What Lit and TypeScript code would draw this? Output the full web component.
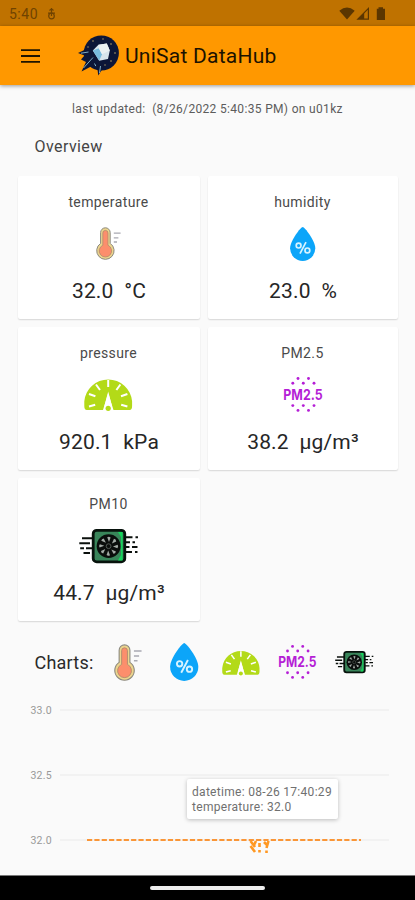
import { LitElement, html, svg, css } from "lit";
import { customElement, property } from "lit/decorators.js";

const thermometer = svg`
  <path d="M4.6 5.6a4.8 4.8 0 0 1 9.6 0V16.4a8.7 8.7 0 1 1-9.6 0Z" fill="#ecd48c" stroke="#8c8a80" stroke-width="1"/>
  <path d="M6.8 6a2.6 2.6 0 0 1 5.2 0V18.2a6.2 6.2 0 1 1-5.2 0Z" fill="#fc8e6c" stroke="#a8866a" stroke-width=".7"/>
  <path d="M17.8 6.2h6.8M17.8 10.8h4.6M17.8 15h3.2" stroke="#a9a9b2" stroke-width="1.3" fill="none"/>`;

const drop = svg`
  <path d="M12.7 0C14.5 0 25.3 13.5 25.3 21.3A12.6 12.6 0 0 1 .1 21.3C.1 13.5 10.9 0 12.7 0Z" fill="#0ca5f9"/>
  <g fill="none" stroke="#d6f3ff" stroke-width="1.7"><circle cx="8.6" cy="18.6" r="2.4"/><circle cx="17.4" cy="23.4" r="2.4"/><path d="M16 15.2 10 26.6"/></g>`;

const gauge = svg`
  <path d="M2.8 33Q.3 33 .3 29V24.3A24 24 0 0 1 48.1 24.3V29Q48.1 33 45.6 33H29.5L24.2 16 19 33Z" fill="#b3da18"/>
  <path d="M24.2 14.5 28 29.3a4.8 4.8 0 0 1-7.6 0Z" fill="#fff"/>
  <path d="M24.2 3V10M12 7.5 16 13M36.4 7.5 32.4 13M5 17 11.4 19.2M43.4 17 37 19.2M5 29.5 11.2 27.8M43.4 29.5 37.2 27.8" stroke="#fff" stroke-width="2" fill="none"/>
  <circle cx="24.2" cy="31.3" r="3.5" fill="#fff"/><circle cx="24.2" cy="31.3" r="2.6" fill="#b3da18"/>`;

const dots = [[15, 1.5], [25.5, 1.5], [9.8, 6.2], [20.3, 6.2], [31, 6.2], [9.8, 28.6], [20.3, 28.6], [31, 28.6], [15, 33.4], [25.5, 33.4]];
const particles = svg`
  ${dots.map(([x, y]) => svg`<circle cx=${x} cy=${y} r="1.45" fill="#b51fd6"/>`)}
  <text x=".3" y="22.6" textLength="39.4" lengthAdjust="spacingAndGlyphs" font-family="Inter, sans-serif" font-weight="650" font-size="14.6" fill="#b51fd6">PM2.5</text>`;

const fan = svg`
  <path d="M3 9.2H14M.3 14.2H11M1.2 19.2H5M7 19.2H14M4.5 24H11" stroke="#0b100d" stroke-width="2.1" fill="none"/>
  <path d="M46 8.2H53.5M56.5 8.2H59M46 13.2H51M53.5 13.2H56M47 18H50.5M53 18H58.5M46 23H53M56 23H58.5" stroke="#0b100d" stroke-width="2" fill="none"/>
  <rect x="14.2" y="1.3" width="31.6" height="31.6" rx="3.5" fill="#39855a" stroke="#07120c" stroke-width="2.8"/>
  <path d="M39 3H43.6V31.5H39L42 26V8Z" fill="#14d55a"/>
  <circle cx="29.6" cy="17.2" r="11.9" fill="#0a0d0c"/>
  ${[0, 45, 90, 135, 180, 225, 270, 315].map(a => svg`<path d="M28.2 8.2Q30 7 31.6 8.4L30 12.9Z" fill="#a3aaa6" transform="rotate(${a} 29.6 17.2)"/>`)}
  <circle cx="29.6" cy="17.2" r="2.4" fill="none" stroke="#59615c" stroke-width=".9"/>`;

const ICONS: Record<string, { w: number; h: number; art: unknown }> = {
  temperature: { w: 25.6, h: 33, art: thermometer },
  humidity: { w: 25.4, h: 34, art: drop },
  pressure: { w: 48.4, h: 34.8, art: gauge },
  pm25: { w: 40, h: 35, art: particles },
  pm10: { w: 59.2, h: 34.2, art: fan },
};

@customElement("sensor-icon")
class SensorIcon extends LitElement {
  @property() name = "temperature";
  @property({ type: Number }) scale = 1;
  static styles = css`:host { display: block; line-height: 0; } .art { display: block; overflow: visible; }`;
  render() {
    const i = ICONS[this.name];
    return html`<svg class="art" width=${i.w * this.scale} height=${i.h * this.scale} viewBox="0 0 ${i.w} ${i.h}">${i.art}</svg>`;
  }
}

@customElement("sensor-card")
class SensorCard extends LitElement {
  @property() label = "";
  @property() icon = "";
  @property() value = "";
  static styles = css`
    :host { display: flex; flex-direction: column; align-items: center; background: #fff; border-radius: 2px; box-shadow: 0 1px 1.5px rgba(0,0,0,.14); }
    .label { margin-top: 17px; font-size: 14px; line-height: 18px; letter-spacing: .38px; margin-right: 1px; color: #4a4a4a; }
    .icon { height: 36px; margin-top: 15px; margin-right: 1px; display: flex; align-items: center; justify-content: center; }
    .value { margin-top: 16px; font-size: 21px; line-height: 26px; letter-spacing: .16px; color: #262626; white-space: pre; }
  `;
  render() {
    return html`<div class="label">${this.label}</div>
      <div class="icon"><sensor-icon name=${this.icon}></sensor-icon></div>
      <div class="value">${this.value}</div>`;
  }
}

@customElement("app-root")
class AppRoot extends LitElement {
  static styles = css`
    :host { display: flex; flex-direction: column; width: 415px; height: 900px; overflow: hidden; background: #fafafa; font-family: Roboto, "Noto Sans", sans-serif; color: #333; }
    svg { display: block; overflow: visible; }
    .status { height: 26px; flex: none; background: #bf7200; color: #704300; display: flex; align-items: center; padding: 1px 28px 0 9px; box-sizing: border-box; }
    .clock { font-size: 14px; letter-spacing: .5px; width: 38px; }
    .tray { margin-left: auto; }
    .bar { height: 59px; flex: none; background: #ff9800; display: flex; align-items: center; padding-left: 21px; box-shadow: 0 1px 4px rgba(0,0,0,.4); z-index: 1; }
    .menu { margin-right: 38px; }
    .title { font-size: 21px; font-weight: 450; letter-spacing: .24px; margin-left: 6px; margin-top: 1px; color: #1c1200; }
    .updated { text-align: center; font-size: 12px; line-height: 16px; margin-top: 16px; letter-spacing: .33px; white-space: pre; color: #5c5c5c; flex: none; }
    .overview { margin: 20px 0 0 34.6px; font-size: 16px; line-height: 20px; letter-spacing: .4px; color: #444; flex: none; }
    .grid { flex: none; display: grid; grid-template-columns: 182px 190px; grid-auto-rows: 143px; gap: 8.4px 8px; margin: 18.5px 0 0 18px; }
    .picker { flex: none; height: 40px; margin-top: 21px; padding-left: 34.6px; display: flex; align-items: center; }
    .charts { font-size: 18px; letter-spacing: .2px; width: 65.4px; color: #2a2a2a; }
    .cell { width: 56.4px; display: flex; justify-content: center; }
    .chart { position: relative; flex: 1; min-height: 0; }
    .axis { font: 10.5px Roboto, sans-serif; letter-spacing: .2px; fill: #999; }
    .tip { position: absolute; left: 187px; top: 97px; width: 151px; height: 40px; box-sizing: border-box; padding: 6px 0 0 5px; background: #fff; border-radius: 2px; box-shadow: 0 1px 4px rgba(0,0,0,.25); font-size: 12px; line-height: 15px; letter-spacing: .3px; color: #707070; white-space: nowrap; }
    .nav { flex: none; height: 25px; background: #000; display: flex; justify-content: center; border-top: 1px solid #777; box-sizing: border-box; }
    .pill { width: 115px; height: 4px; margin-top: 10px; border-radius: 2px; background: #eee; }
  `;
  render() {
    const ticks: [string, number][] = [["33.0", 28], ["32.5", 93], ["32.0", 158]];
    const picks: [string, number][] = [["temperature", 1.12], ["humidity", 1.12], ["pressure", 0.78], ["pm25", 0.97], ["pm10", 0.65]];
    return html`
      <div class="status">
        <span class="clock">5:40</span>
        <svg width="9" height="12" viewBox="0 0 9 12" fill="none" stroke="#704300" stroke-width="1.2"><circle cx="4.5" cy="8" r="2.8"/><path d="M4.5 0V8M2.5 2.5 4.5 .8 6.5 2.5M1 5.2H8"/></svg>
        <svg class="tray" width="48" height="14" viewBox="0 0 48 14" fill="#5b3600">
          <path d="M.3 3.8Q8 -2.6 15.7 3.8L8 12.5Z"/>
          <path d="M18.8 12.2 29.4 1.4V12.2Z" fill="none" stroke="#5b3600" stroke-width="1.2"/>
          <path d="M25.2 6V12H19Z"/>
          <path d="M39.5 .2H44V1.8H46V13H37.8V1.8H39.5Z"/>
        </svg>
      </div>
      <div class="bar">
        <svg class="menu" width="19" height="14" viewBox="0 0 19 14"><path d="M0 1.1H19M0 7H19M0 12.9H19" stroke="#1e1400" stroke-width="1.8"/></svg>
        <svg width="41" height="41" viewBox="0 0 41 41">
          <circle cx="23.3" cy="18" r="17.6" fill="#0c1638"/>
          <path d="M8.5 14 0 18 6.5 20.5 3 24.5 8 27 3.5 36.5 13 31.5 19.5 34 20.2 40.5 24.5 34 30 24 16 12Z" fill="#0c1638"/>
          <path d="M14.8 15.5 20.5 9.8 28.8 8.6 31.8 15.4 30 24 21.2 25.8Z" fill="#d7e4ec"/>
          <path d="M14.8 15.5 20.8 13.2 24 19.2 21.2 25.8Z" fill="#78bbdf"/>
          <path d="M20.5 9.8 28.8 8.6 31.8 15.4 24 19.2 20.8 13.2Z" fill="#eaf0f2"/>
          <path d="M3 18.2 10.5 17M5.5 33 15 22.5M21.5 38 22.5 31M16.5 28.5l1.3 2.6" stroke="#7eafc8" stroke-width="1" fill="none"/>
          <g fill="#b8a26a"><circle cx="15" cy="6" r=".8"/><circle cx="25" cy="4" r=".7"/><circle cx="33" cy="9" r=".8"/><circle cx="37" cy="18" r=".8"/><circle cx="33" cy="26" r=".8"/><circle cx="10" cy="12" r=".7"/><circle cx="27" cy="30" r=".7"/></g>
        </svg>
        <span class="title">UniSat DataHub</span>
      </div>
      <div class="updated">last updated:  (8/26/2022 5:40:35 PM) on u01kz</div>
      <div class="overview">Overview</div>
      <div class="grid">
        <sensor-card label="temperature" icon="temperature" value="32.0  °C"></sensor-card>
        <sensor-card label="humidity" icon="humidity" value="23.0  %"></sensor-card>
        <sensor-card label="pressure" icon="pressure" value="920.1  kPa"></sensor-card>
        <sensor-card label="PM2.5" icon="pm25" value="38.2  µg/m³"></sensor-card>
        <sensor-card label="PM10" icon="pm10" value="44.7  µg/m³"></sensor-card>
      </div>
      <div class="picker">
        <span class="charts">Charts:</span>
        ${picks.map(([n, s]) => html`<div class="cell"><sensor-icon name=${n} .scale=${s}></sensor-icon></div>`)}
      </div>
      <div class="chart">
        <svg width="415" height="192" viewBox="0 0 415 192">
          ${ticks.map(([t, y]) => svg`<text class="axis" x="30.5" y=${y + 3.8}>${t}</text><path d="M60 ${y}H389" stroke="#efefef" stroke-width="1.4"/>`)}
          <path d="M87 158H361" stroke="#fa9637" stroke-width="2" stroke-dasharray="5.2 2.15"/>
          <path d="M250.5 159 255 165M250.5 164 255 170M256 159 254 163M259.5 161V165M259.5 168V170.5M268.5 159 266.5 166M264 160 267 163M266.5 168.5V171" stroke="#ff9822" stroke-width="2.6" fill="none"/>
        </svg>
        <div class="tip">datetime: 08-26 17:40:29<br>temperature: 32.0</div>
      </div>
      <div class="nav"><div class="pill"></div></div>`;
  }
}
